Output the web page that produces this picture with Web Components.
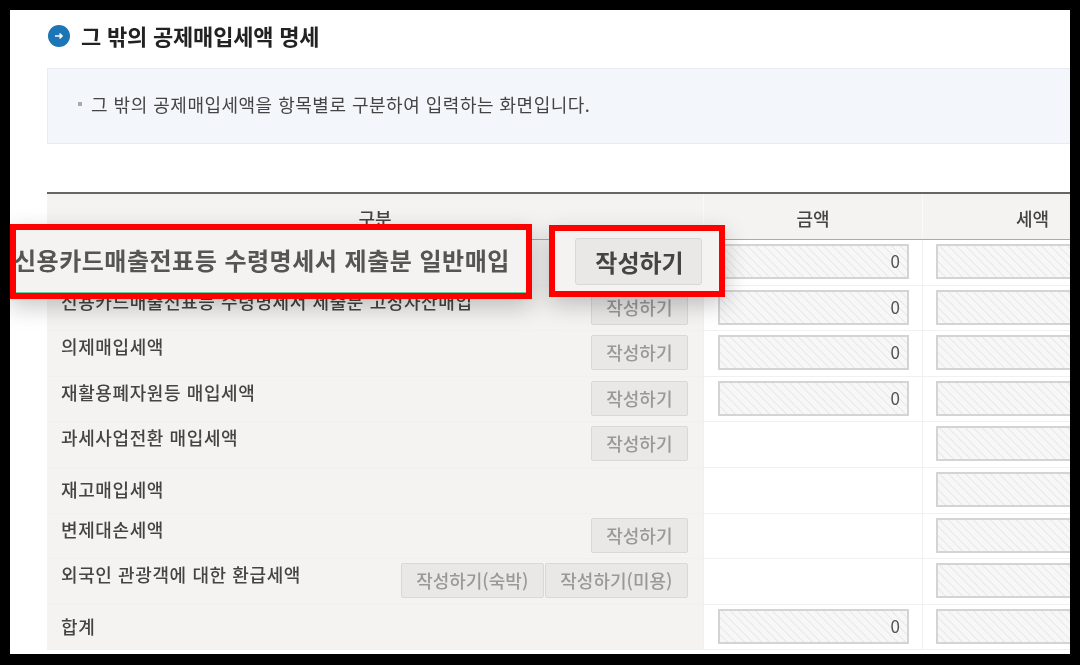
<!DOCTYPE html>
<html lang="ko">
<head>
<meta charset="utf-8">
<title>그 밖의 공제매입세액 명세</title>
<style>
  html, body { margin: 0; height: 100%; background: #000; overflow: hidden; }
  body { font-family: "Noto Sans CJK KR", "Noto Sans", sans-serif; }
</style>
</head>
<body>
<tax-page>
  <section-title>그 밖의 공제매입세액 명세</section-title>
  <info-box>그 밖의 공제매입세액을 항목별로 구분하여 입력하는 화면입니다.</info-box>
  <deduction-table>
    <!-- label and button of the first row are shown by the callouts on top of it -->
    <deduction-row label="" amount="0"></deduction-row>
    <deduction-row label="신용카드매출전표등 수령명세서 제출분 고정자산매입" amount="0" top><action-btn>작성하기</action-btn></deduction-row>
    <deduction-row label="의제매입세액" amount="0" top><action-btn>작성하기</action-btn></deduction-row>
    <deduction-row label="재활용폐자원등 매입세액" amount="0" top><action-btn>작성하기</action-btn></deduction-row>
    <deduction-row label="과세사업전환 매입세액" top><action-btn>작성하기</action-btn></deduction-row>
    <deduction-row label="재고매입세액"></deduction-row>
    <deduction-row label="변제대손세액" top><action-btn>작성하기</action-btn></deduction-row>
    <deduction-row label="외국인 관광객에 대한 환급세액" top><action-btn>작성하기(숙박)</action-btn><action-btn>작성하기(미용)</action-btn></deduction-row>
    <deduction-row label="합계" amount="0"></deduction-row>
  </deduction-table>
  <callout-box slot="callouts" style="left:0;top:214px;width:522px;height:75px">신용카드매출전표등 수령명세서 제출분 일반매입</callout-box>
  <callout-box slot="callouts" button style="left:539px;top:215px;width:176px;height:72px">작성하기</callout-box>
</tax-page>

<script>
class TaxPage extends HTMLElement {
  constructor() {
    super();
    this.attachShadow({ mode: 'open' }).innerHTML = `
      <style>
        :host { display: block; box-sizing: border-box; width: 1080px; height: 665px; padding: 10px 10px 11px; background: #000; }
        .panel { position: relative; height: 100%; box-sizing: border-box; padding: 15px 0 0 37px; background: #fff; overflow: hidden; filter: blur(.3px); }
      </style>
      <div class="panel"><slot></slot><slot name="callouts"></slot></div>`;
  }
}

class SectionTitle extends HTMLElement {
  constructor() {
    super();
    this.attachShadow({ mode: 'open' }).innerHTML = `
      <style>
        :host { display: flex; align-items: center; gap: 11px; height: 22px; margin-left: 1px; color: #222; font-size: 22px; font-weight: 700; letter-spacing: -.2px; line-height: 20px; white-space: nowrap; }
        svg { flex: none; display: block; }
        .t { margin-top: -3px; }
      </style>
      <svg width="22" height="22" viewBox="0 0 22 22">
        <circle cx="11" cy="11" r="11" fill="#1c76b6"/>
        <path d="M7 11h7M11.500 8.500 14 11l-2.500 2.500" fill="none" stroke="#fff" stroke-width="1.600"/>
      </svg>
      <span class="t"><slot></slot></span>`;
  }
}

class InfoBox extends HTMLElement {
  constructor() {
    super();
    this.attachShadow({ mode: 'open' }).innerHTML = `
      <style>
        :host { display: flex; align-items: center; box-sizing: border-box; width: 1100px; height: 76px; margin-top: 21px; padding: 0 0 4px 30px; gap: 9px; background: #f3f6fb; border: 1px solid #e7ebf2; color: #444; font-size: 18px; letter-spacing: .5px; white-space: nowrap; }
        i { width: 4px; height: 4px; background: #aaa; flex: none; }
      </style>
      <i></i><slot></slot>`;
  }
}

class DeductionTable extends HTMLElement {
  constructor() {
    super();
    this.attachShadow({ mode: 'open' }).innerHTML = `
      <style>
        :host { display: block; width: 1100px; margin-top: 48px; border-top: 2px solid #666; }
        .head { display: grid; grid-template-columns: 656px 219px 225px; height: 46px; box-sizing: border-box; background: #f4f3f1; border-bottom: 1px solid #aaa; color: #444; font-size: 18px; font-weight: 500; }
        .head div { display: flex; align-items: center; justify-content: center; box-sizing: border-box; padding-top: 2px; border-left: 1px solid #fafafa; }
        .head div:first-child { border-left: 0; }
        .head div:last-child { justify-content: flex-start; padding-left: 93px; }
      </style>
      <div class="head"><div>구분</div><div>금액</div><div>세액</div></div>
      <slot></slot>`;
  }
}

class DeductionRow extends HTMLElement {
  connectedCallback() {
    if (this.shadowRoot) return;
    const amount = this.getAttribute('amount');
    const root = this.attachShadow({ mode: 'open' });
    root.innerHTML = `
      <style>
        :host { display: grid; grid-template-columns: 656px 219px 225px; height: 45.6px; box-sizing: border-box; border-bottom: 1px solid #f0f0f0; }
        :host(:last-child) { height: 45px; }
        .label { display: flex; justify-content: space-between; box-sizing: border-box; padding: 0 15px 2px 14px; background: #f4f3f1; color: #444; font-size: 18px; font-weight: 500; white-space: nowrap; align-items: center; }
        :host([top]) .label { align-items: flex-start; padding: 4px 15px 0 14px; }
        :host([top]) .text { margin-top: -2px; }
        .text { letter-spacing: .6px; }
        .btns { display: flex; gap: 1px; }
        .cell { display: flex; align-items: flex-start; padding: 4px 0 0 14px; border-left: 1px solid #f0f0f0; }
        .cell:last-child { padding-left: 13px; }
        .field { box-sizing: border-box; width: 191px; height: 35px; padding-right: 7px; border: 2px solid #d4d4d4; color: #555; font-size: 17px; line-height: 30px; text-align: right; background: repeating-linear-gradient(45deg, #f7f7f7 0 4.5px, #ececec 4.5px 6px); }
      </style>
      <div class="label"><span class="text">${this.getAttribute('label')}</span><span class="btns"><slot></slot></span></div>
      <div class="cell">${amount !== null ? `<div class="field">${amount}</div>` : ''}</div>
      <div class="cell"><div class="field"></div></div>`;
  }
}

class ActionBtn extends HTMLElement {
  constructor() {
    super();
    this.attachShadow({ mode: 'open' }).innerHTML = `
      <style>
        :host { display: block; box-sizing: border-box; height: 35px; padding: 0 14.5px; background: #e9e8e7; border: 1px solid #d8d8d8; border-radius: 2px; color: #999; font-size: 18px; line-height: 33px; white-space: nowrap; }
      </style>
      <slot></slot>`;
  }
}

// the two red highlight boxes laid over the first table row
class CalloutBox extends HTMLElement {
  constructor() {
    super();
    this.attachShadow({ mode: 'open' }).innerHTML = `
      <style>
        :host { position: absolute; display: flex; align-items: center; box-sizing: border-box; border: 6px solid #f00; background: #f4f3f1; box-shadow: 0 8px 22px rgba(0,0,0,.22); color: #555; font-size: 24px; font-weight: 700; letter-spacing: .5px; white-space: nowrap; }
        :host(:not([button])) { padding-bottom: 4px; }
        :host(:not([button]))::after { content: ""; position: absolute; left: 0; right: 0; bottom: 0; height: 1px; background: #5fd0a0; }
        :host(:not([button])) .b { margin-left: -2px; }
        :host([button]) { justify-content: center; color: #444; letter-spacing: 0; }
        :host([button]) .b { box-sizing: border-box; width: 127px; height: 47px; margin-left: 2px; padding-left: 3px; display: flex; align-items: center; justify-content: center; background: #e9e8e7; border: 1px solid #d8d8d8; border-radius: 3px; }
      </style>
      <div class="b"><slot></slot></div>`;
  }
}

customElements.define('tax-page', TaxPage);
customElements.define('section-title', SectionTitle);
customElements.define('info-box', InfoBox);
customElements.define('deduction-table', DeductionTable);
customElements.define('deduction-row', DeductionRow);
customElements.define('action-btn', ActionBtn);
customElements.define('callout-box', CalloutBox);
</script>
</body>
</html>
